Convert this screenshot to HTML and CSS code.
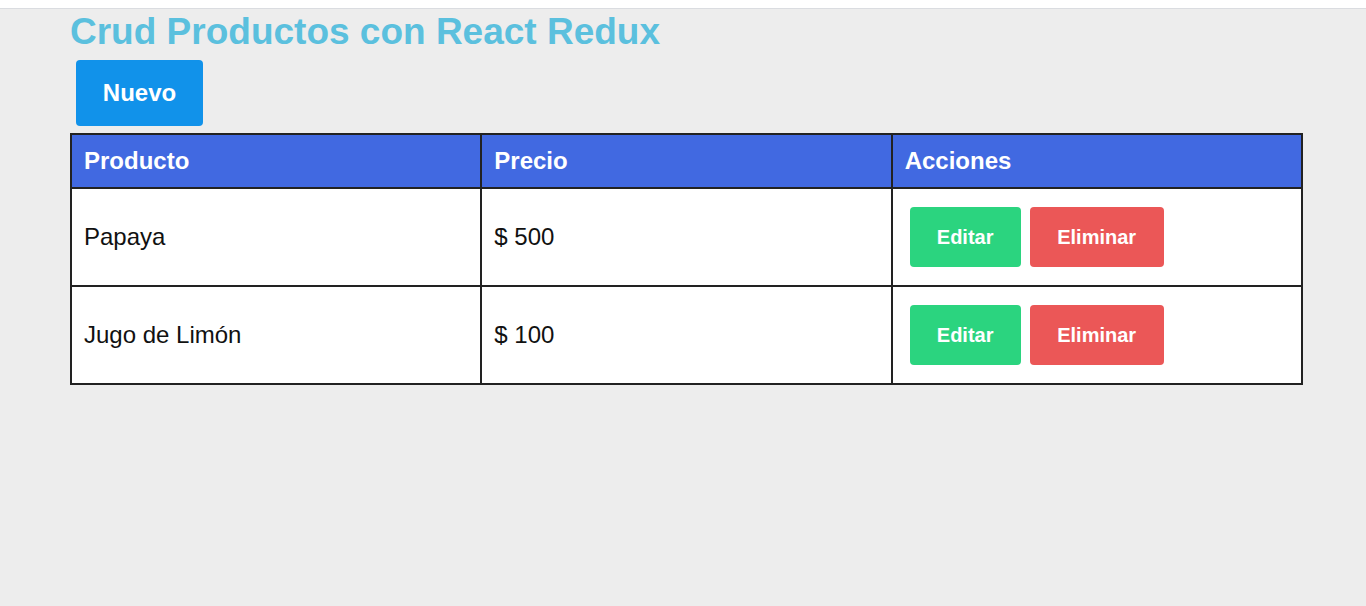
FILE: index.html
```html
<!DOCTYPE html>
<html lang="es">
<head>
<meta charset="utf-8">
<title>Crud Productos con React Redux</title>
<link rel="stylesheet" href="styles.css">
</head>
<body>
<div class="topbar"></div>
<main class="container">
  <h1 class="title">Crud Productos con React Redux</h1>
  <div class="toolbar">
    <button class="btn btn-new">Nuevo</button>
  </div>
  <table class="products">
    <thead>
      <tr>
        <th>Producto</th>
        <th>Precio</th>
        <th>Acciones</th>
      </tr>
    </thead>
    <tbody>
      <tr>
        <td>Papaya</td>
        <td>$ 500</td>
        <td class="actions"><div class="action-group"><button class="btn btn-edit">Editar</button><button class="btn btn-delete">Eliminar</button></div></td>
      </tr>
      <tr>
        <td>Jugo de Limón</td>
        <td>$ 100</td>
        <td class="actions"><div class="action-group"><button class="btn btn-edit">Editar</button><button class="btn btn-delete">Eliminar</button></div></td>
      </tr>
    </tbody>
  </table>
</main>
</body>
</html>
```
FILE: styles.css
```css
html, body {
  margin: 0;
  padding: 0;
}
body {
  background: #ededed;
  font-family: "Liberation Sans", Arial, sans-serif;
  color: #111;
  min-height: 606px;
}
.topbar {
  height: 8px;
  background: #ffffff;
  border-bottom: 1px solid #dadce0;
}
.container {
  padding: 0 63px 0 70px;
}
.title {
  margin: 0;
  padding-top: 2px;
  font-size: 37px;
  line-height: 42px;
  font-weight: bold;
  color: #5bc0de;
}
.toolbar {
  padding: 7px 0 7px 6px;
}
.btn {
  border: none;
  border-radius: 4px;
  color: #ffffff;
  font-family: "Liberation Sans", Arial, sans-serif;
  font-weight: bold;
  cursor: pointer;
}
.btn-new {
  display: block;
  width: 127px;
  height: 66px;
  font-size: 24px;
  background: #1192ea;
}
.products {
  width: 1233px;
  border-collapse: collapse;
  table-layout: fixed;
  background: #ffffff;
  font-size: 24px;
}
.products th,
.products td {
  border: 2px solid #222;
  text-align: left;
  padding: 0 12px;
}
.products th {
  background: #4169e1;
  color: #ffffff;
  font-weight: bold;
  height: 52px;
}
.products td {
  height: 96px;
}
.products td.actions {
  padding-left: 17px;
}
.action-group {
  display: flex;
  gap: 9px;
}
.btn-edit,
.btn-delete {
  height: 60px;
  font-size: 20px;
}
.btn-edit {
  width: 111px;
  background: #2bd47f;
}
.btn-delete {
  width: 134px;
  background: #eb5757;
}
```
